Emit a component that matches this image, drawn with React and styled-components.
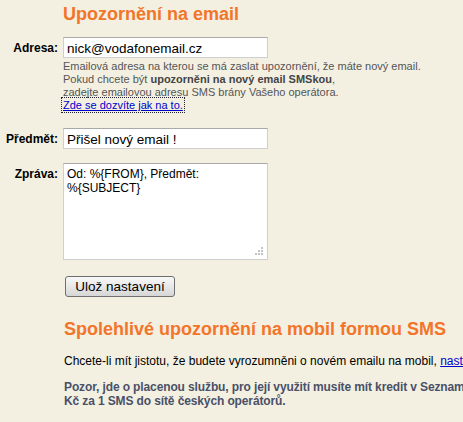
import React from 'react';
import styled, { createGlobalStyle } from 'styled-components';

const GlobalStyle = createGlobalStyle`
    html, body {
        margin: 0;
        padding: 0;
        background: #f3f0e2;
        overflow: hidden;
    }
    body {
        font-family: Arial, "Liberation Sans", sans-serif;
        color: #000;
    }
`

const Page = styled.div`
    width: 820px;
    padding-top: 3px;
`
const Heading = styled.h2`
    margin: ${props => props.top || 0}px 0 0 ${props => props.left || 63}px;
    font-size: 18px;
    line-height: 22px;
    font-weight: bold;
    color: #f2752a;
`
const Row = styled.div`
    display: grid;
    grid-template-columns: 58px 205px;
    column-gap: 5px;
    align-items: start;
    margin-top: ${props => props.top || 0}px;
`
const Label = styled.label`
    text-align: right;
    font-size: 12px;
    font-weight: bold;
    line-height: 14px;
    padding-top: ${props => props.pad || 0}px;
    white-space: nowrap;
`
const Field = styled.input`
    box-sizing: border-box;
    width: 205px;
    height: 21px;
    margin: 0;
    padding: 1px 3px 0;
    border: 1px solid #cfcfcf;
    border-top-color: #a9a9a9;
    background: #fff;
    font-family: Arial, "Liberation Sans", sans-serif;
    font-size: 13.5px;
    color: #000;
    outline: none;
`
const AreaBox = styled.div`
    position: relative;
    width: 205px;
    height: 97px;
    svg {
        position: absolute;
        right: 5px;
        bottom: 5px;
    }
`
const Area = styled.textarea`
    display: block;
    box-sizing: border-box;
    width: 205px;
    height: 97px;
    margin: 0;
    padding: 3px 3px;
    border: 1px solid #cfcfcf;
    border-top-color: #a9a9a9;
    background: #fff;
    font-family: Arial, "Liberation Sans", sans-serif;
    font-size: 12px;
    line-height: 14px;
    color: #000;
    outline: none;
    resize: none;
`
const Help = styled.div`
    grid-column: 2;
    width: 420px;
    margin-top: 2px;
    font-size: 11px;
    line-height: 13px;
    color: #555;
    b {
        color: #444;
    }
`
const HelpLink = styled.a`
    color: #0000cc;
    text-decoration: underline;
    outline: 1px dotted #223;
    outline-offset: 1px;
`
const Actions = styled.div`
    margin: 16px 0 0 65px;
`
const Button = styled.button`
    box-sizing: border-box;
    width: 110px;
    height: 21px;
    padding: 0;
    border: 1px solid #6f6f6f;
    border-radius: 3px;
    background: linear-gradient(#f8f8f8, #e6e6e6 55%, #d6d6d6);
    font-family: Arial, "Liberation Sans", sans-serif;
    font-size: 13.5px;
    color: #000;
`
const Text = styled.p`
    margin: ${props => props.top || 0}px 0 0 64px;
    font-size: 12px;
    line-height: 14px;
    white-space: nowrap;
    a {
        color: #0000cc;
    }
`
const Warning = styled(Text)`
    font-weight: bold;
    letter-spacing: -0.12px;
    color: #4a5068;
`

// malý úchyt v rohu textarea
const Grip = () => <svg width="8" height="8" viewBox="0 0 8 8">
    {[[6, 0], [3, 3], [6, 3], [0, 6], [3, 6], [6, 6]].map(([x, y]) =>
        <rect key={x + '-' + y} x={x} y={y} width="2" height="2" fill="#c4c4c4" />)}
</svg>

export default function App() {
    return <Page>
        <GlobalStyle />
        <Heading>Upozornění na email</Heading>
        <Row top={12}>
            <Label pad={4}>Adresa:</Label>
            <Field defaultValue="nick@vodafonemail.cz" />
            <Help>
                Emailová adresa na kterou se má zaslat upozornění, že máte nový email.<br />
                Pokud chcete být <b>upozorněni na nový email SMSkou</b>,<br />
                zadejte emailovou adresu SMS brány Vašeho operátora.<br />
                <HelpLink href="#">Zde se dozvíte jak na to.</HelpLink>
            </Help>
        </Row>
        <Row top={16}>
            <Label pad={4}>Předmět:</Label>
            <Field defaultValue="Přišel nový email !" />
        </Row>
        <Row top={14}>
            <Label pad={4}>Zpráva:</Label>
            <AreaBox>
                <Area defaultValue={'Od: %{FROM}, Předmět:\n%{SUBJECT}'} />
                <Grip />
            </AreaBox>
        </Row>
        <Actions>
            <Button type="button">Ulož nastavení</Button>
        </Actions>
        <Heading top={21} left={64}>Spolehlivé upozornění na mobil formou SMS</Heading>
        <Text top={14}>
            Chcete-li mít jistotu, že budete vyrozumněni o novém emailu na mobil, <a href="#">nastavte si SMS upozornění</a>.
        </Text>
        <Warning top={12}>
            Pozor, jde o placenou službu, pro její využití musíte mít kredit v Seznam Peněžence. Cena je 3<br />
            Kč za 1 SMS do sítě českých operátorů.
        </Warning>
    </Page>
}
